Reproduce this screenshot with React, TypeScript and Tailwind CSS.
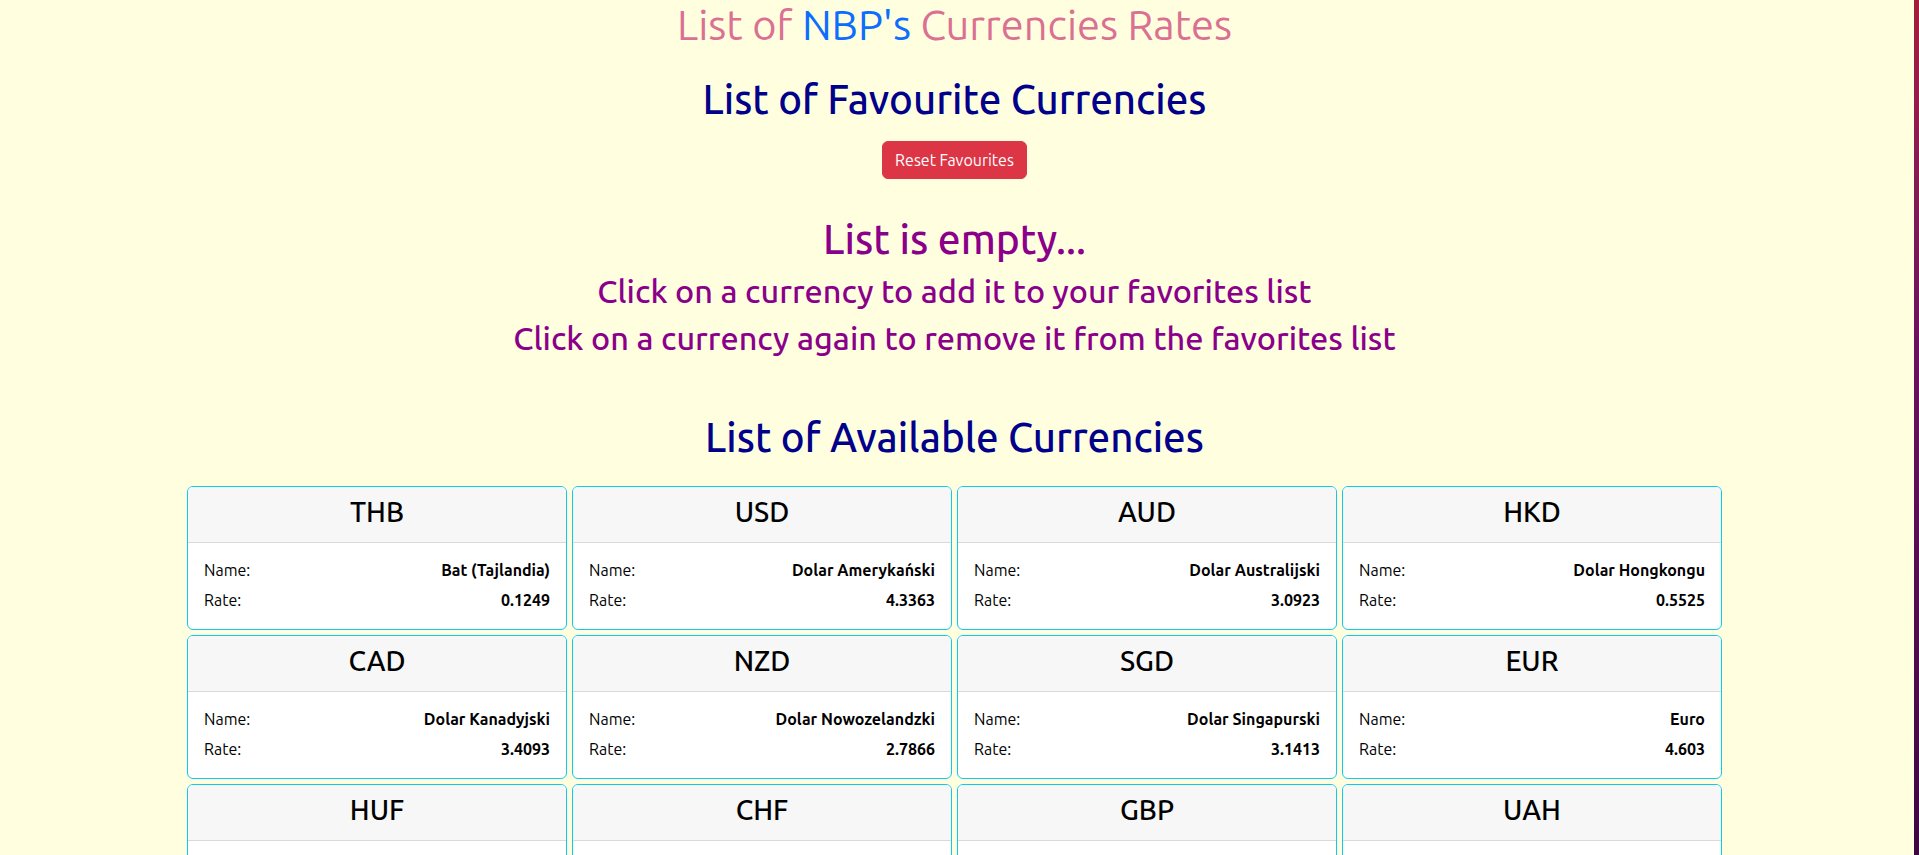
import React from "react";

type Cur = { code: string; name: string; rate: string };

const currencies: Cur[] = [
  { code: "THB", name: "Bat (Tajlandia)", rate: "0.1249" },
  { code: "USD", name: "Dolar Amerykański", rate: "4.3363" },
  { code: "AUD", name: "Dolar Australijski", rate: "3.0923" },
  { code: "HKD", name: "Dolar Hongkongu", rate: "0.5525" },
  { code: "CAD", name: "Dolar Kanadyjski", rate: "3.4093" },
  { code: "NZD", name: "Dolar Nowozelandzki", rate: "2.7866" },
  { code: "SGD", name: "Dolar Singapurski", rate: "3.1413" },
  { code: "EUR", name: "Euro", rate: "4.603" },
  { code: "HUF", name: "Forint (Węgry)", rate: "0.011781" },
  { code: "CHF", name: "Frank Szwajcarski", rate: "4.6321" },
  { code: "GBP", name: "Funt Szterling", rate: "5.2587" },
  { code: "UAH", name: "Hrywna (Ukraina)", rate: "0.1183" },
  { code: "JPY", name: "Jen (Japonia)", rate: "0.030546" },
  { code: "CZK", name: "Korona Czeska", rate: "0.1871" },
  { code: "DKK", name: "Korona Duńska", rate: "0.6171" },
  { code: "ISK", name: "Korona Islandzka", rate: "0.031524" },
];

function Card({ c }: { c: Cur }) {
  return (
    <div className="flex flex-col overflow-hidden rounded-[6px] border border-[#0dcaf0] bg-white text-black">
      <div className="flex h-[56px] items-start justify-center border-b border-[#d9d9d9] bg-[#f7f7f7] pt-2">
        <h3 className="text-[28px] font-medium leading-[1.2]">{c.code}</h3>
      </div>
      <div className="flex flex-col gap-[6px] px-4 pb-[17px] pt-[15px] text-[16px] leading-[24px]">
        <div className="flex justify-between">
          <span>Name:</span>
          <span className="font-bold">{c.name}</span>
        </div>
        <div className="flex justify-between">
          <span>Rate:</span>
          <span className="font-bold">{c.rate}</span>
        </div>
      </div>
    </div>
  );
}

export default function App() {
  return (
    <div className="flex h-screen overflow-hidden bg-[#ffffe0] font-[Ubuntu,'Open_Sans',sans-serif]">
      <main className="flex flex-1 flex-col items-center overflow-hidden">
        <h1 className="text-[41.6px] font-normal leading-[1.2] text-[#db7093]">
          List of <span className="text-[#0d6efd]">NBP's</span> Currencies Rates
        </h1>
        <h2 className="mt-[25px] text-[40.3px] font-medium leading-[1.2] text-[#00008b]">List of Favourite Currencies</h2>
        <button className="mt-[18px] rounded-[6px] border border-[#dc3545] bg-[#dc3545] px-3 py-[6px] text-[16px] leading-[24px] text-white">
          Reset Favourites
        </button>
        <h2 className="mt-[36px] text-[40.7px] font-medium leading-[1.2] text-[#8b008b]">List is empty...</h2>
        <h3 className="mt-2 text-[32.4px] font-medium leading-[1.2] text-[#8b008b]">
          Click on a currency to add it to your favorites list
        </h3>
        <h3 className="mt-2 text-[32.4px] font-medium leading-[1.2] text-[#8b008b]">
          Click on a currency again to remove it from the favorites list
        </h3>
        <h2 className="mt-[55px] text-[40.3px] font-medium leading-[1.2] text-[#00008b]">List of Available Currencies</h2>
        <div className="mt-[25px] grid grid-cols-[repeat(4,380px)] gap-[5px]">
          {currencies.map((c) => (
            <Card key={c.code} c={c} />
          ))}
        </div>
      </main>
      <div className="flex w-[10px] justify-end">
        <div className="h-full w-[5px] bg-linear-to-b from-[#a21e3c] via-[#6c1160] via-40% to-[#3b0842]" />
      </div>
    </div>
  );
}
